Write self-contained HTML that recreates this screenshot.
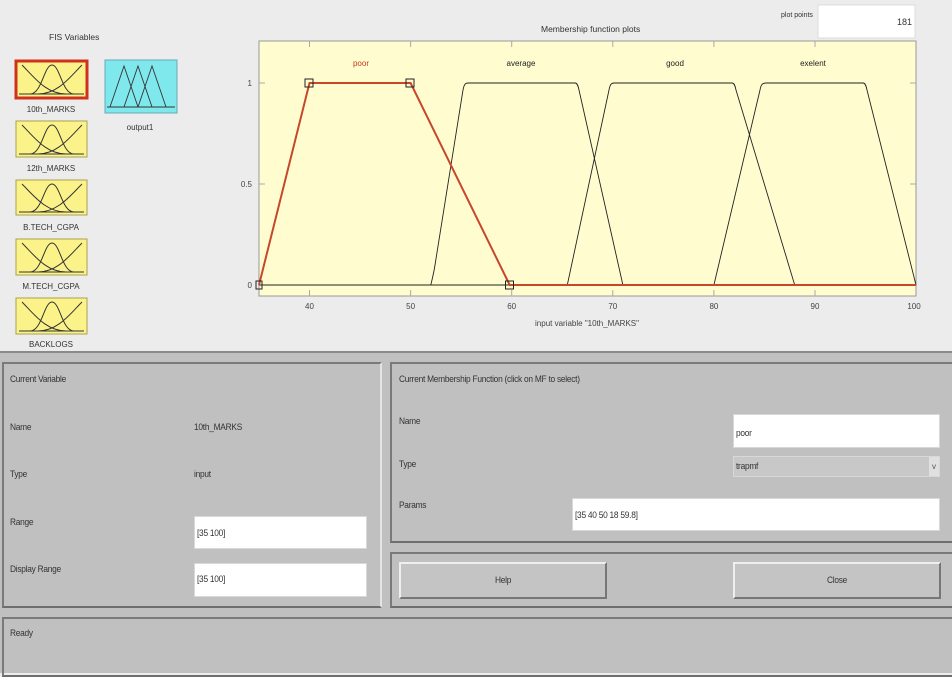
<!DOCTYPE html>
<html><head><meta charset="utf-8"><style>
*{margin:0;padding:0;box-sizing:border-box}
body{width:952px;height:673px;overflow:hidden;background:#ececec;font-family:"Liberation Sans",sans-serif;font-size:9px;color:#222;position:relative}
.a{position:absolute}
.t{position:absolute;font-size:9.5px;letter-spacing:-0.3px;white-space:nowrap;transform:scaleX(0.88);transform-origin:left top;color:#333}
.panel{position:absolute;border-top:2px solid #7a7a7a;border-left:2px solid #7a7a7a;border-right:2px solid #e4e4e4;border-bottom:2px solid #6e6e6e}
.inp{position:absolute;background:#fff;border:1px solid #d8d8d8}
.btn{position:absolute;background:#c4c4c4;border-top:2px solid #efefef;border-left:2px solid #efefef;border-right:2px solid #777;border-bottom:2px solid #777}
</style></head><body>
<div class="a" style="left:0;top:351px;width:952px;height:322px;background:#c0c0c0;border-top:2px solid #8a8a8a"></div>

<svg class="a" style="left:0;top:0" width="952" height="351">
<g font-family="Liberation Sans" font-size="8.5" fill="#333">
<text x="49" y="40">FIS Variables</text>
<text x="541" y="32">Membership function plots</text>
<text x="781" y="17" font-size="7">plot points</text>
</g>
<rect x="818" y="5" width="97" height="33" fill="#fff" stroke="#dcdcdc"/>
<text x="912" y="25" font-size="9" text-anchor="end" fill="#333" font-family="Liberation Sans">181</text>

<g stroke="#333" stroke-width="1" fill="none">
<g transform="translate(16,61)"><rect x="0" y="0" width="71" height="37" fill="#fbf389" stroke="#d0301c" stroke-width="3"/><path d="M6,4 C18,16 30,33 50,33M14,33 C26,33 28,4 36,4 C44,4 46,33 58,33M22,33 C42,33 54,16 66,4M3,33H68"/></g>
<g transform="translate(16,121)"><rect x="0" y="0" width="71" height="36" fill="#fbf389" stroke="#a8a050"/><path d="M6,4 C18,16 30,33 50,33M14,33 C26,33 28,4 36,4 C44,4 46,33 58,33M22,33 C42,33 54,16 66,4M3,33H68"/></g>
<g transform="translate(16,180)"><rect x="0" y="0" width="71" height="35" fill="#fbf389" stroke="#a8a050"/><path d="M6,4 C18,16 30,32 50,32M14,32 C26,32 28,4 36,4 C44,4 46,32 58,32M22,32 C42,32 54,16 66,4M3,32H68"/></g>
<g transform="translate(16,239)"><rect x="0" y="0" width="71" height="36" fill="#fbf389" stroke="#a8a050"/><path d="M6,4 C18,16 30,33 50,33M14,33 C26,33 28,4 36,4 C44,4 46,33 58,33M22,33 C42,33 54,16 66,4M3,33H68"/></g>
<g transform="translate(16,298)"><rect x="0" y="0" width="71" height="36" fill="#fbf389" stroke="#a8a050"/><path d="M6,4 C18,16 30,33 50,33M14,33 C26,33 28,4 36,4 C44,4 46,33 58,33M22,33 C42,33 54,16 66,4M3,33H68"/></g>
<g transform="translate(105,60)"><rect x="0" y="0" width="72" height="53" fill="#7fe8ec" stroke="#6ab"/><path d="M2,47H70M5,47 L19,6 L33,47M19,47 L33,6 L47,47M33,47 L47,6 L61,47" stroke-width="0.9"/></g>
</g>
<g font-family="Liberation Sans" font-size="8" fill="#333" text-anchor="middle">
<text x="51" y="112">10th_MARKS</text>
<text x="51" y="171">12th_MARKS</text>
<text x="51" y="230">B.TECH_CGPA</text>
<text x="51" y="289">M.TECH_CGPA</text>
<text x="51" y="347">BACKLOGS</text>
<text x="140" y="130">output1</text>
</g>

<rect x="259" y="41" width="657" height="255" fill="#fffdd0" stroke="#999"/>
<g stroke="#aaa" stroke-width="1">
<path d="M309.5,41v6M410.6,41v6M511.7,41v6M612.8,41v6M713.9,41v6M815,41v6M309.5,296v-6M410.6,296v-6M511.7,296v-6M612.8,296v-6M713.9,296v-6M815,296v-6M259,83h6M259,184h6M916,83h-6M916,184h-6"/>
</g>
<g font-family="Liberation Sans" font-size="8" fill="#444">
<text x="252" y="86" text-anchor="end">1</text>
<text x="252" y="187" text-anchor="end">0.5</text>
<text x="252" y="288" text-anchor="end">0</text>
<g text-anchor="middle">
<text x="309.5" y="309">40</text><text x="410.6" y="309">50</text><text x="511.7" y="309">60</text><text x="612.8" y="309">70</text><text x="713.9" y="309">80</text><text x="815" y="309">90</text><text x="914" y="309">100</text>
<text x="587" y="326">input variable "10th_MARKS"</text>
<text x="361" y="66" fill="#c0391b">poor</text>
<text x="521" y="66" fill="#222">average</text>
<text x="675" y="66" fill="#222">good</text>
<text x="813" y="66" fill="#222">exelent</text>
</g></g>
<g fill="none" stroke="#222" stroke-width="0.9">
<path d="M259,285H916"/>
<path d="M430.8,285 C432,280 434,272 435,265 L463,90 C464,85 465,83 468,83 L575,83 C577,83 578,85 579,90 L622.9,285"/>
<path d="M567.3,285 L609,90 C610,85 611,83 614,83 L732,83 C734,83 735,85 736,90 L794.7,285"/>
<path d="M713.9,285 L760,90 C761,85 762,83 766,83 L863,83 C865,83 866,85 867,90 L916,285"/>
</g>
<g fill="none" stroke="#c8462a" stroke-width="2">
<path d="M259,285 L309.5,83 L410.6,83 L509.7,285 L916,285"/>
</g>
<g fill="none" stroke="#222" stroke-width="1">
<rect x="305" y="79" width="8" height="8"/><rect x="406" y="79" width="8" height="8"/><rect x="505.5" y="281" width="8" height="8"/><rect x="256" y="281" width="6" height="8"/>
</g>
</svg>

<div class="panel" style="left:2px;top:362px;width:380px;height:246px"></div>
<div class="t" style="left:10px;top:374px">Current Variable</div>
<div class="t" style="left:10px;top:422px">Name</div>
<div class="t" style="left:194px;top:422px">10th_MARKS</div>
<div class="t" style="left:10px;top:469px">Type</div>
<div class="t" style="left:194px;top:469px">input</div>
<div class="t" style="left:10px;top:517px">Range</div>
<div class="inp" style="left:194px;top:516px;width:173px;height:33px"></div>
<div class="t" style="left:197px;top:528px">[35 100]</div>
<div class="t" style="left:10px;top:564px">Display Range</div>
<div class="inp" style="left:194px;top:563px;width:173px;height:34px"></div>
<div class="t" style="left:197px;top:574px">[35 100]</div>

<div class="panel" style="left:390px;top:362px;width:564px;height:181px"></div>
<div class="t" style="left:399px;top:374px">Current Membership Function (click on MF to select)</div>
<div class="t" style="left:399px;top:416px">Name</div>
<div class="inp" style="left:733px;top:414px;width:207px;height:34px"></div>
<div class="t" style="left:736px;top:428px">poor</div>
<div class="t" style="left:399px;top:459px">Type</div>
<div class="a" style="left:733px;top:456px;width:207px;height:21px;background:#c8c8c8;border:1px solid #d8d8d8"></div>
<div class="a" style="left:929px;top:457px;width:10px;height:19px;background:#e0e0e0;font-size:8px;color:#555;text-align:center;line-height:19px">v</div>
<div class="t" style="left:736px;top:461px">trapmf</div>
<div class="t" style="left:399px;top:500px">Params</div>
<div class="inp" style="left:572px;top:498px;width:368px;height:33px"></div>
<div class="t" style="left:575px;top:510px">[35 40 50 18 59.8]</div>

<div class="panel" style="left:390px;top:552px;width:564px;height:56px"></div>
<div class="btn" style="left:399px;top:562px;width:208px;height:37px"></div>
<div class="t" style="left:495px;top:575px">Help</div>
<div class="btn" style="left:733px;top:562px;width:208px;height:37px"></div>
<div class="t" style="left:827px;top:575px">Close</div>

<div class="panel" style="left:2px;top:617px;width:952px;height:60px"></div>
<div class="t" style="left:10px;top:628px">Ready</div>
</body></html>
